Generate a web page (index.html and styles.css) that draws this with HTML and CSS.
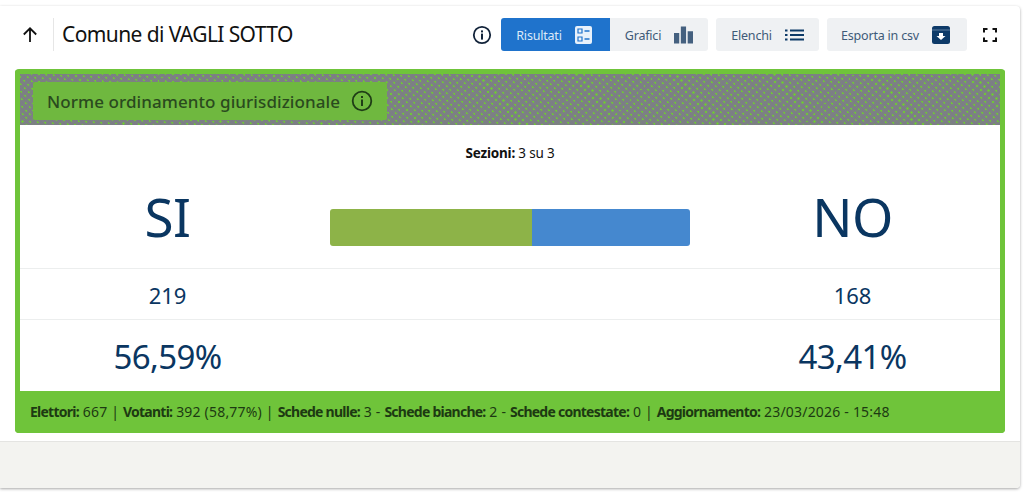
FILE: index.html
```html
<!DOCTYPE html>
<html lang="it">
<head>
<meta charset="utf-8">
<title>Comune di VAGLI SOTTO</title>
<link rel="stylesheet" href="styles.css">
</head>
<body>
<main class="page">
  <header class="topbar">
    <svg class="back" viewBox="0 0 18 18" width="18" height="18"><path d="M9 16V2.5M2.8 8.5 9 2.3l6.2 6.2" fill="none" stroke="#111" stroke-width="1.8"/></svg>
    <h1 class="title">Comune di VAGLI SOTTO</h1>
    <svg class="info" viewBox="0 0 20 20" width="20" height="20"><circle cx="10" cy="10" r="8.2" fill="none" stroke="#12233a" stroke-width="1.8"/><rect x="9" y="8.6" width="2" height="6" fill="#12233a"/><rect x="9" y="5.4" width="2" height="2" fill="#12233a"/></svg>
    <div class="tabs">
      <button class="btn tab active">Risultati
        <svg viewBox="0 0 18 18" width="18" height="18"><rect width="17" height="18" rx="2" fill="#e8f1fb"/><path d="M3 3h4v4H3zM3 11h4v4H3z" fill="none" stroke="#1f73cc" stroke-width="1.2"/><path d="M9.5 5h5M9.5 13h5" stroke="#1f73cc" stroke-width="1.6"/></svg>
      </button>
      <button class="btn tab">Grafici
        <svg viewBox="0 0 20 18" width="19" height="18"><path d="M0 7h5.500v11H0zM7.200 0h5.500v18H7.200zM14.400 5H20v13h-5.600z" fill="#44607f"/></svg>
      </button>
    </div>
    <button class="btn elenchi">Elenchi
      <svg viewBox="0 0 19 12" width="19" height="12"><path d="M5 1.500h14M5 6h14M5 10.500h14" stroke="#0d3a68" stroke-width="2"/><path d="M0 .5h2.500v2H0zM0 5h2.500v2H0zM0 9.500h2.500v2H0z" fill="#0d3a68"/></svg>
    </button>
    <button class="btn esporta">Esporta in csv
      <svg viewBox="0 0 18 18" width="18" height="18"><rect width="18" height="18" rx="2.500" fill="#0d3a68"/><rect y="3.500" width="18" height="1" fill="#5f7f9f"/><path d="M7 7h4v3h2.500L9 14l-4.500-4H7z" fill="#fff"/></svg>
    </button>
    <svg class="expand" viewBox="0 0 14 14" width="14" height="14"><path d="M1 4.500V1h3.500M9.500 1H13v3.500M13 9.500V13H9.500M4.500 13H1V9.500" fill="none" stroke="#111" stroke-width="2"/></svg>
  </header>

  <section class="card">
    <div class="pattern">
      <div class="label">Norme ordinamento giurisdizionale
        <svg viewBox="0 0 22 22" width="22" height="22"><circle cx="11" cy="11" r="9.300" fill="none" stroke="#1f3d16" stroke-width="1.800"/><rect x="10" y="9.500" width="2" height="6.500" fill="#1f3d16"/><rect x="10" y="6" width="2" height="2" fill="#1f3d16"/></svg>
      </div>
    </div>
    <div class="body">
      <p class="sections"><b>Sezioni:</b> 3 su 3</p>
      <div class="results">
        <div class="cell big">SI</div>
        <div class="cell barcell"><div class="bar"><span class="yes"></span><span class="no"></span></div></div>
        <div class="cell big">NO</div>
        <div class="cell votes">219</div>
        <div class="cell votes"></div>
        <div class="cell votes">168</div>
        <div class="cell pct">56,59%</div>
        <div class="cell pct"></div>
        <div class="cell pct">43,41%</div>
      </div>
    </div>
    <div class="stats"><b>Elettori:</b> 667 | <b>Votanti:</b> 392 (58,77%) | <b>Schede nulle:</b> 3 - <b>Schede bianche:</b> 2 - <b>Schede contestate:</b> 0 | <b>Aggiornamento:</b> 23/03/2026 - 15:48</div>
  </section>
  <div class="foot"></div>
</main>
</body>
</html>
```

FILE: styles.css
```css
* { box-sizing: border-box; }
html, body { margin: 0; background: #fff; }
body {
  height: 492px;
  overflow: hidden;
  padding-top: 6px;
  font-family: "Noto Sans", "Open Sans", sans-serif;
}
.page {
  width: 1020px;
  height: 482px;
  border-radius: 0 4px 4px 0;
  box-shadow: 0 1px 3px rgba(0,0,0,.35);
  background: #fff;
  display: flex;
  flex-direction: column;
}
.topbar {
  height: 63px;
  padding: 12px 23px 0 21px;
  display: flex;
  align-items: flex-start;
}
.back { margin-top: 8px; flex: none; }
.title {
  margin: 0 0 0 14px;
  padding-left: 8px;
  height: 33px;
  border-left: 1px solid #e6e6e6;
  font-size: 21px;
  line-height: 33px;
  font-weight: 400;
  letter-spacing: -.6px;
  color: #111;
  flex: 1;
}
.info { margin: 7px 9px 0 0; flex: none; }
.tabs { display: flex; }
.btn {
  height: 33px;
  border: 0;
  border-radius: 3px;
  padding: 2px 0 0;
  background: #eff1f3;
  font: 400 12.5px "Noto Sans", sans-serif;
  letter-spacing: -.2px;
  color: #3e5a78;
  display: flex;
  align-items: center;
  justify-content: center;
  gap: 13px;
}
.btn svg { margin-top: -2px; }
.tab { border-radius: 0 3px 3px 0; width: 98px; }
.tab.active { width: 109px; padding-right: 2px; background: #1f73cc; color: #dbe9f8; border-radius: 3px 0 0 3px; }
.elenchi { width: 103px; margin-left: 8px; }
.esporta { width: 140px; margin-left: 8px; padding-right: 3px; }
.expand { margin: 10px 0 0 16px; flex: none; }
.card {
  margin: 0 15px;
  height: 364px;
  flex: none;
  border: 5px solid #6fc43a;
  border-bottom: 0;
  border-radius: 4px;
  background: #fff;
  display: flex;
  flex-direction: column;
}
.pattern {
  height: 51px;
  flex: none;
  padding: 8px 0 0 13px;
  background-color: #6fc43a;
  background-image:
    repeating-linear-gradient(45deg, rgba(125,125,135,.9) 0 3.5px, transparent 3.5px 5px),
    repeating-linear-gradient(-45deg, rgba(125,125,135,.9) 0 3.5px, transparent 3.5px 5.6px);
}
.label {
  width: 354px;
  height: 38px;
  padding-left: 14px;
  background: #6fb83f;
  border-radius: 2px;
  display: flex;
  align-items: center;
  gap: 11px;
  font-size: 17px;
  font-weight: 500;
  letter-spacing: .08px;
  color: #2a4a1e;
}
.body { flex: 1; display: flex; flex-direction: column; }
.sections {
  margin: 0;
  height: 52px;
  padding-top: 19px;
  font-size: 13.5px;
  line-height: 19px;
  letter-spacing: -.2px;
  text-align: center;
  color: #111;
}
.results {
  display: grid;
  grid-template-columns: 295px 390px 295px;
  grid-template-rows: 91px 51px 71px;
  width: 980px;
}
.cell {
  display: flex;
  align-items: center;
  justify-content: center;
  color: #0a3661;
}
.big { font-size: 53px; letter-spacing: -.5px; font-weight: 400; padding-bottom: 12px; }
.barcell { padding-top: 10px; }
.bar {
  width: 360px;
  height: 37px;
  display: flex;
  border-radius: 3px;
  overflow: hidden;
}
.yes { width: 56%; background: #8db348; }
.no { flex: 1; background: #4588cf; }
.votes, .pct { border-top: 1px solid #eceeee; }
.votes { font-size: 22px; letter-spacing: -.1px; padding-top: 1px; }
.pct { font-size: 33px; letter-spacing: -.6px; padding-top: 3px; }
.stats {
  height: 42px;
  flex: none;
  margin: 0 -5px;
  padding: 0 15px;
  background: #6fc43a;
  border-radius: 0 0 4px 4px;
  white-space: nowrap;
  font-size: 14px;
  line-height: 42px;
  letter-spacing: .2px;
  color: #1d3a12;
}
.stats b { letter-spacing: -.75px; }
.foot {
  margin-top: 8px;
  flex: 1;
  background: #f3f3f0;
  border-top: 1px solid #e4e4e2;
  border-radius: 0 0 4px 0;
}
```
